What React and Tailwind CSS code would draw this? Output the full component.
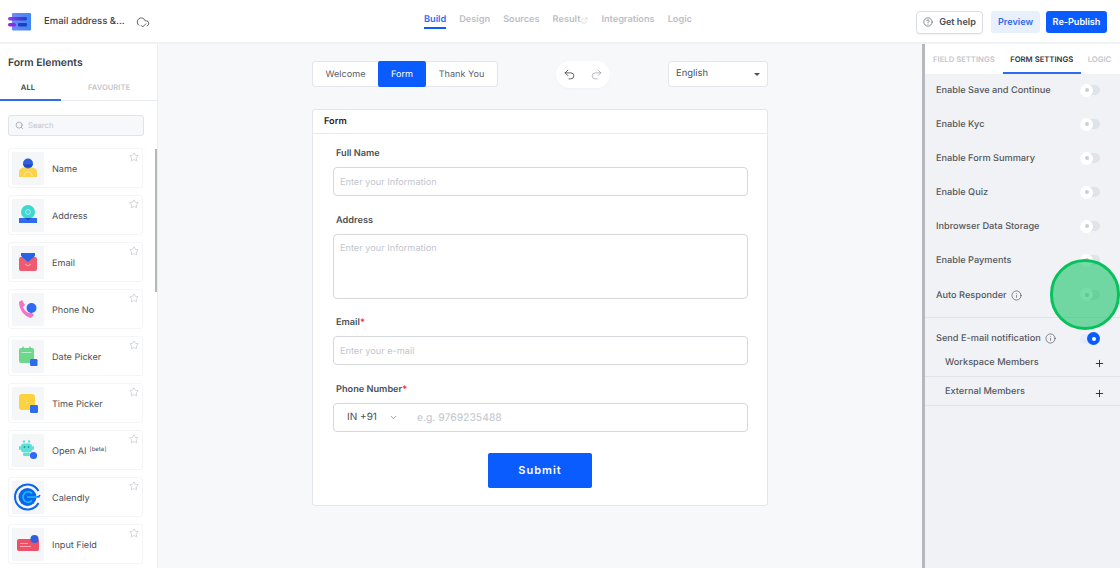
import { Star, Search, CloudCheck, CircleHelp, Info, Plus, ChevronDown, Undo2, Redo2, ExternalLink } from 'lucide-react'

const navItems = ['Build', 'Design', 'Sources', 'Result', 'Integrations', 'Logic']

const NameIcon = () => (
  <svg width="20" height="20" viewBox="0 0 20 20">
    <path d="M1 19v-5c0-3 3-5 9-5s9 2 9 5v5z" fill="#fdd34d" />
    <path d="M6 18c0-3 2-4 4-4s4 1 4 4" fill="none" stroke="#fde68a" strokeWidth="1" />
    <circle cx="10" cy="5.5" r="5" fill="#2f5fe0" />
    <path d="M5 6.5h10l-2 2.5H7z" fill="#1e46c0" />
  </svg>
)
const AddressIcon = () => (
  <svg width="20" height="20" viewBox="0 0 20 20">
    <circle cx="10" cy="7" r="7" fill="#3ed8cf" />
    <circle cx="10" cy="7" r="2.4" fill="none" stroke="#a8f0ea" strokeWidth="1" />
    <path d="M1 13h18v5H1z" fill="#2f6bf0" />
    <path d="M7 13h6l-3 2.5z" fill="#1f49c4" />
  </svg>
)
const EmailIcon = () => (
  <svg width="20" height="20" viewBox="0 0 20 20">
    <rect x="1" y="5" width="18" height="14" rx="2" fill="#ee5b70" />
    <path d="M7 12l3 2 3-2" fill="none" stroke="#fbc6cd" strokeWidth="0.8" />
    <path d="M3 1h14v3l-7 6-7-6z" fill="#2563eb" />
  </svg>
)
const PhoneIcon = () => (
  <svg width="20" height="20" viewBox="0 0 20 20">
    <path d="M1 3l3-2 3 5-2 2c1 3 3 5 6 6l2-1 3 3-3 3C7 18 1 11 1 3z" fill="#f472c8" />
    <circle cx="13.5" cy="9" r="5" fill="#2f6bf0" />
  </svg>
)
const DateIcon = () => (
  <svg width="20" height="20" viewBox="0 0 20 20">
    <rect x="1" y="2" width="15" height="15" rx="2" fill="#6fd68e" />
    <path d="M3.5 6.5h10" stroke="#b6efc8" strokeWidth="1" />
    <path d="M5 0.5v2M12 0.5v2" stroke="#4cb86d" strokeWidth="1" />
    <rect x="12" y="13" width="7.5" height="7" rx="1.2" fill="#2f6bf0" />
  </svg>
)
const TimeIcon = () => (
  <svg width="20" height="20" viewBox="0 0 20 20">
    <rect x="1" y="1" width="16" height="16" rx="3" fill="#fdd23f" />
    <path d="M8 6v3l2 1" fill="none" stroke="#fbe58c" strokeWidth="0.8" />
    <rect x="12" y="12" width="8" height="8" rx="1.2" fill="#2f6bf0" />
  </svg>
)
const BotIcon = () => (
  <svg width="20" height="20" viewBox="0 0 20 20">
    <rect x="3" y="3.5" width="11" height="9" rx="3" fill="#5fe0d8" />
    <rect x="1" y="6" width="2" height="4" rx="1" fill="#5fe0d8" />
    <rect x="14" y="6" width="2" height="4" rx="1" fill="#5fe0d8" />
    <circle cx="6" cy="1.5" r="1.2" fill="#5fe0d8" />
    <circle cx="11" cy="1.5" r="1.2" fill="#5fe0d8" />
    <rect x="5" y="13" width="7" height="3" rx="1" fill="#5fe0d8" />
    <circle cx="6.5" cy="7" r="0.9" fill="#1f9d95" />
    <circle cx="10.5" cy="7" r="0.9" fill="#1f9d95" />
    <circle cx="15.5" cy="15.5" r="3.6" fill="#2f6bf0" />
  </svg>
)
const CalendlyIcon = () => (
  <svg width="28" height="28" viewBox="0 0 28 28">
    <path d="M24.5 8A12.5 12.5 0 1 0 24.5 20" fill="none" stroke="#0a66f0" strokeWidth="2" />
    <circle cx="13.5" cy="14" r="9" fill="#0a66f0" />
    <path d="M18 10.5a5.2 5.2 0 1 0 0 7" fill="none" stroke="#12c7f0" strokeWidth="1.6" />
    <path d="M13 14h13" stroke="#12c7f0" strokeWidth="1.4" />
    <path d="M22.5 14c2.5 0 3.5-2 3.5-2" fill="none" stroke="#0a66f0" strokeWidth="1.6" />
  </svg>
)
const InputIcon = () => (
  <svg width="24" height="20" viewBox="0 0 24 20">
    <rect x="1" y="5" width="22" height="12" rx="2" fill="#ee5068" />
    <path d="M4 9.5h8M4 12.5h11" stroke="#fbc0c8" strokeWidth="0.8" />
    <circle cx="18.5" cy="5" r="4" fill="#2f5fe0" />
  </svg>
)

const elements = [
  { label: 'Name', icon: NameIcon },
  { label: 'Address', icon: AddressIcon },
  { label: 'Email', icon: EmailIcon },
  { label: 'Phone No', icon: PhoneIcon },
  { label: 'Date Picker', icon: DateIcon },
  { label: 'Time Picker', icon: TimeIcon },
  { label: 'Open AI', icon: BotIcon, beta: true },
  { label: 'Calendly', icon: CalendlyIcon },
  { label: 'Input Field', icon: InputIcon },
]

const toggles = ['Enable Save and Continue', 'Enable Kyc', 'Enable Form Summary', 'Enable Quiz', 'Inbrowser Data Storage', 'Enable Payments']

function Toggle({ on }) {
  return (
    <div className={`relative h-[10px] w-[20px] rounded-full ${on ? 'bg-[#e4ecfb]' : '-mt-[2px] bg-[#dfe3ea]'}`}>
      <div className={`absolute top-[-1.5px] flex h-[13px] w-[13px] items-center justify-center rounded-full ${on ? 'right-0 bg-[#0b5cff]' : 'left-0 bg-white'}`}>
        <div className={`h-[4px] w-[4px] rounded-full ${on ? 'bg-white' : 'bg-[#c9ced6]'}`} />
      </div>
    </div>
  )
}

function Field({ label, required, className = '', children }) {
  return (
    <div className={className}>
      <p className="mb-[6px] ml-[3px] h-[17px] text-[9.2px] leading-[19px] font-semibold text-[#4b4f58]">
        {label}
        {required && <span className="text-[#e5283a]">*</span>}
      </p>
      {children}
    </div>
  )
}

export default function App() {
  return (
    <div className="flex h-[568px] w-[1120px] flex-col overflow-hidden bg-white font-['Inter',sans-serif] [text-rendering:geometricPrecision]">
      {/* Header */}
      <header className="flex h-[44px] shrink-0 items-center border-b-2 border-[#f0f2f5] pt-[2px] pr-[13px] pl-[8px]">
        <div className="flex w-[300px] items-center">
          <svg width="23" height="18" viewBox="0 0 23 18">
            <defs>
              <linearGradient id="logo" x1="0" x2="1" y1="0" y2="0">
                <stop offset="0" stopColor="#6f8bf7" />
                <stop offset="1" stopColor="#3f86f5" />
              </linearGradient>
              <linearGradient id="logoBar" x1="0" x2="1" y1="0" y2="0">
                <stop offset="0" stopColor="#9a3fe6" />
                <stop offset="1" stopColor="#1b3fc4" />
              </linearGradient>
            </defs>
            <rect x="4" y="0" width="19" height="17.5" fill="url(#logo)" rx="1" />
            <rect x="0" y="4" width="19" height="3.5" fill="url(#logoBar)" rx="1.7" />
            <rect x="0" y="10" width="8" height="3.5" fill="#8a2be2" rx="1.7" />
            <rect x="10" y="10" width="9" height="3.5" fill="#1b3fc4" rx="1" />
          </svg>
          <span className="ml-[13px] text-[9.5px] font-medium text-[#3f434b]">Email address &...</span>
          <CloudCheck size={14} strokeWidth={1.5} className="ml-[11px] text-[#4b4f58]" />
        </div>
        <nav className="ml-[116px] flex h-full items-start gap-[13px] pt-[7px]">
          {navItems.map((item, i) => (
            <div key={item} className={`flex h-[20px] items-start gap-[1px] pt-[3px] text-[9.2px] leading-[15px] font-semibold ${i === 0 ? 'border-b-2 border-[#0b5cff] text-[#2f6bf0]' : 'text-[#bcc0c7]'}`}>
              {item}
              {item === 'Result' && <ExternalLink size={7} strokeWidth={1.5} className="mt-[5px]" />}
            </div>
          ))}
        </nav>
        <div className="ml-auto flex items-center">
          <button className="flex h-[23px] w-[67px] items-center justify-center gap-[6px] rounded-[4px] border border-[#d9dce1] text-[9.1px] font-semibold text-[#4b4f58] shadow-[0_1px_1px_rgba(0,0,0,0.05)]">
            <CircleHelp size={10} strokeWidth={1.5} />
            Get help
          </button>
          <button className="ml-[8px] h-[22px] w-[49px] rounded-[3px] bg-[#e8f0fd] text-[9.1px] font-semibold text-[#2f6bf0]">Preview</button>
          <button className="ml-[6px] h-[22px] w-[61px] rounded-[3px] bg-[#0b5cff] text-[9.1px] font-semibold text-white">Re-Publish</button>
        </div>
      </header>

      <div className="flex min-h-0 flex-1">
        {/* Left sidebar */}
        <aside className="relative w-[158px] shrink-0 overflow-hidden border-r border-[#e9ecf1] bg-white">
          <h2 className="mt-[12px] ml-[8px] text-[10.4px] leading-[14px] font-semibold text-[#3a3d44]">Form Elements</h2>
          <div className="mt-[7px] flex h-[24px] border-b border-[#e7eaf0]">
            <div className="-mb-px flex w-[61px] items-center justify-center border-b-2 border-[#2f6bf0] pr-[5px] text-[7.7px] font-semibold text-[#3a3d44]">ALL</div>
            <div className="flex flex-1 items-center justify-center pb-[2px] text-[7.6px] font-semibold text-[#c4c7cd]">FAVOURITE</div>
          </div>
          <div className="mx-[8px] mt-[14px] flex h-[21px] w-[136px] items-center gap-[4px] rounded-[3px] border border-[#dfe3ea] bg-[#f7f8fa] pl-[6px] text-[7.7px] text-[#c2c6cd]">
            <Search size={9} strokeWidth={1.5} className="text-[#7b808a]" />
            <span className="pt-[1px]">Search</span>
          </div>
          <div className="mt-[12px] flex flex-col gap-[7px] pl-[8px]">
            {elements.map(({ label, icon: Icon, beta }) => (
              <div key={label} className="relative flex h-[40px] w-[135px] shrink-0 items-center rounded-[3px] border border-[#f4f5f7] pl-[3px]">
                <div className="flex h-[33px] w-[32px] items-center justify-center bg-[#f5f6f8]">
                  <Icon />
                </div>
                <span className="ml-[8px] pt-[3px] text-[9.1px] text-[#4b4f58]">
                  {label}
                  {beta && <sup className="ml-[3px] text-[6px]">[beta]</sup>}
                </span>
                <Star size={10} strokeWidth={1} className="absolute top-[3px] right-[3px] text-[#9ca1a9]" />
              </div>
            ))}
          </div>
          <div className="absolute top-[105px] right-0 h-[143px] w-[2px] bg-[#b5b8bd]" />
        </aside>

        {/* Canvas */}
        <main className="flex min-w-0 flex-1 justify-center bg-[#f7f8fa] pt-[17px]">
          <div className="w-[456px]">
            <div className="flex h-[26px] items-center justify-between">
              <div className="flex h-[26px] w-[186px] rounded-[3px] border border-[#e3e6eb] bg-white pt-[1px] text-[9.1px] text-[#5a5e66]">
                <div className="flex w-[65px] items-center justify-center">Welcome</div>
                <div className="-mt-[2px] -mb-px flex h-[26px] w-[48px] items-center justify-center rounded-[2px] bg-[#0b5cff] pt-[1px] text-white">Form</div>
                <div className="flex flex-1 items-center justify-center">Thank You</div>
              </div>
              <div className="flex h-[27px] w-[54px] items-center justify-center gap-[14px] rounded-full bg-white shadow-[0_1px_3px_rgba(0,0,0,0.03)]">
                <Undo2 size={13} strokeWidth={1.4} className="text-[#2f3238]" />
                <Redo2 size={13} strokeWidth={1.2} className="text-[#8f949c]" />
              </div>
              <div className="flex h-[26px] w-[100px] items-center justify-between rounded-[3px] border border-[#e3e6eb] bg-white pt-[1px] pr-[7px] pl-[7px] text-[9.4px] text-[#4b4f58]">
                English
                <div className="h-0 w-0 border-x-[3px] border-t-[3px] border-x-transparent border-t-[#4b4f58]" />
              </div>
            </div>

            <div className="mt-[22px] h-[397px] rounded-[3px] border border-[#e3e6eb] bg-white">
              <div className="flex h-[24px] items-center border-b border-[#e9ebf0] pt-[1px] pl-[11px] text-[9.2px] font-semibold text-[#1f2126]">Form</div>
              <div className="pt-[10px] pr-[19px] pl-[20px]">
                <Field label="Full Name">
                  <div className="flex h-[29px] items-center rounded-[4px] border border-[#d6d8dc] pt-[2px] pl-[6px] text-[9.2px] text-[#c2c6cd]">Enter your Information</div>
                </Field>
                <Field label="Address" className="mt-[15px]">
                  <div className="h-[65px] rounded-[4px] border border-[#d6d8dc] pt-[7px] pl-[6px] text-[9.2px] text-[#c2c6cd]">Enter your Information</div>
                </Field>
                <Field label="Email" required className="mt-[14px]">
                  <div className="flex h-[29px] items-center rounded-[4px] border border-[#d6d8dc] pt-[2px] pl-[6px] text-[9.2px] text-[#c2c6cd]">Enter your e-mail</div>
                </Field>
                <Field label="Phone Number" required className="mt-[15px]">
                  <div className="flex h-[29px] items-center rounded-[4px] border border-[#d6d8dc] pl-[13px] text-[10px] text-[#4b4f58]">
                    IN +91
                    <ChevronDown size={9} strokeWidth={1.5} className="ml-[12px]" />
                    <span className="ml-[19px] text-[10.4px] text-[#c2c6cd]">e.g. 9769235488</span>
                  </div>
                </Field>
                <div className="mt-[21px] flex justify-center pr-[1px]">
                  <button className="h-[35px] w-[104px] rounded-[2px] bg-[#0b5cff] text-[11px] font-semibold tracking-[0.09em] text-white">Submit</button>
                </div>
              </div>
            </div>
          </div>
        </main>

        {/* Right panel */}
        <aside className="relative w-[198px] shrink-0 overflow-hidden border-l-[3px] border-[#b5b8bd] bg-[#f0f2f5]">
          <div className="flex h-[30px] items-start bg-white pt-[10px] text-[7.7px] font-semibold whitespace-nowrap">
            <span className="ml-[8px] text-[#c4c7cd]">FIELD SETTINGS</span>
            <div className="ml-[8px] flex h-[20px] w-[78px] justify-center border-b-2 border-[#2f6bf0] text-[#33363c]">FORM SETTINGS</div>
            <span className="ml-[7px] text-[#c4c7cd]">LOGIC</span>
          </div>
          <div className="pr-[20px] pl-[11px] text-[9.2px] font-medium text-[#55585f]">
            {toggles.map((label) => (
              <div key={label} className="flex h-[34px] items-center justify-between">
                {label}
                <Toggle />
              </div>
            ))}
            <div className="flex h-[35px] items-center justify-between">
              <span className="flex items-center gap-[4px]">
                Auto Responder
                <Info size={11} strokeWidth={1.2} className="text-[#2f3238]" />
              </span>
              <Toggle />
            </div>
          </div>
          <div className="mt-[4px] border-t border-[#e0e4ea] pt-[12px] text-[9.2px] font-medium text-[#55585f]">
            <div className="flex h-[17px] items-center justify-between pr-[20px] pl-[11px]">
              <span className="flex items-center gap-[4px]">
                Send E-mail notification
                <Info size={11} strokeWidth={1.2} className="text-[#2f3238]" />
              </span>
              <Toggle on />
            </div>
            <div className="flex h-[30px] items-center justify-between border-b border-[#e0e4ea] pt-[2px] pr-[15px] pl-[20px]">
              Workspace Members
              <Plus size={11} strokeWidth={2} className="mt-[2px] text-[#26282d]" />
            </div>
            <div className="flex h-[29px] items-center justify-between border-b border-[#e0e4ea] pt-[2px] pr-[15px] pl-[20px]">
              External Members
              <Plus size={11} strokeWidth={2} className="mt-[2px] text-[#26282d]" />
            </div>
          </div>
          <div className="absolute top-[215px] left-[125px] h-[71px] w-[70px] rounded-full border-[3px] border-[#08c15c] bg-[#08c15c]/55" />
        </aside>
      </div>
    </div>
  )
}
